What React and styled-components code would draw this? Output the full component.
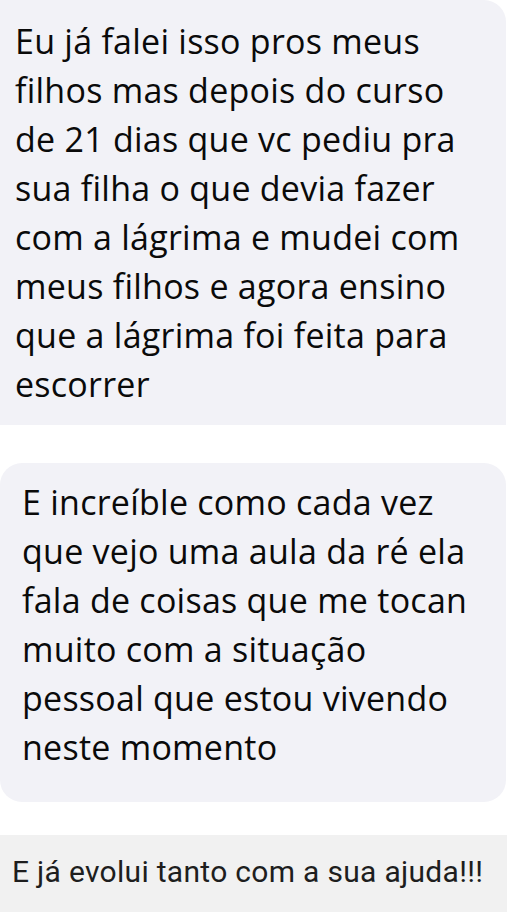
import React from 'react';
import styled, { createGlobalStyle } from 'styled-components';

const GlobalStyle = createGlobalStyle`
  html, body {
    margin: 0;
    padding: 0;
    background: #ffffff;
  }
  body {
    width: 507px;
    height: 912px;
    overflow: hidden;
  }
`;

const Page = styled.div`
  display: flex;
  flex-direction: column;
  width: 507px;
`;

const Bubble = styled.div`
  background: #f2f2f7;
  color: #0a0a0a;
  font-family: 'Open Sans', 'Noto Sans', sans-serif;
  font-size: 34px;
  line-height: 49px;
  width: ${p => p.width}px;
  padding: ${p => p.pad};
  border-radius: ${p => p.radius};
  margin-bottom: ${p => p.gap}px;
  box-sizing: border-box;
  letter-spacing: 0.25px;
`;

const Line = styled.div`
  white-space: nowrap;
`;

const Footer = styled.div`
  background: #f1f1f1;
  color: #1e1e1e;
  font-family: Roboto, 'Liberation Sans', sans-serif;
  font-size: 30px;
  padding: 19px 0 40px 12px;
  letter-spacing: 0.3px;
`;

const first = [
  'Eu já falei isso pros meus',
  'filhos mas depois do curso',
  'de 21 dias que vc pediu pra',
  'sua filha o que devia fazer',
  'com a lágrima e mudei com',
  'meus filhos e agora ensino',
  'que a lágrima foi feita para',
  'escorrer',
];

const second = [
  'E increíble como cada vez',
  'que vejo uma aula da ré ela',
  'fala de coisas que me tocan',
  'muito com a situação',
  'pessoal que estou vivendo',
  'neste momento',
];

export default function App() {
  return (
    <Page>
      <GlobalStyle />
      <Bubble width={506} pad="17px 14px 16px 15px" radius="0 22px 0 0" gap={38}>
        {first.map(t => (
          <Line key={t}>{t}</Line>
        ))}
      </Bubble>
      <Bubble width={506} pad="15px 14px 30px 22px" radius="22px" gap={33}>
        {second.map(t => (
          <Line key={t}>{t}</Line>
        ))}
      </Bubble>
      <Footer>E já evolui tanto com a sua ajuda!!!</Footer>
    </Page>
  );
}
